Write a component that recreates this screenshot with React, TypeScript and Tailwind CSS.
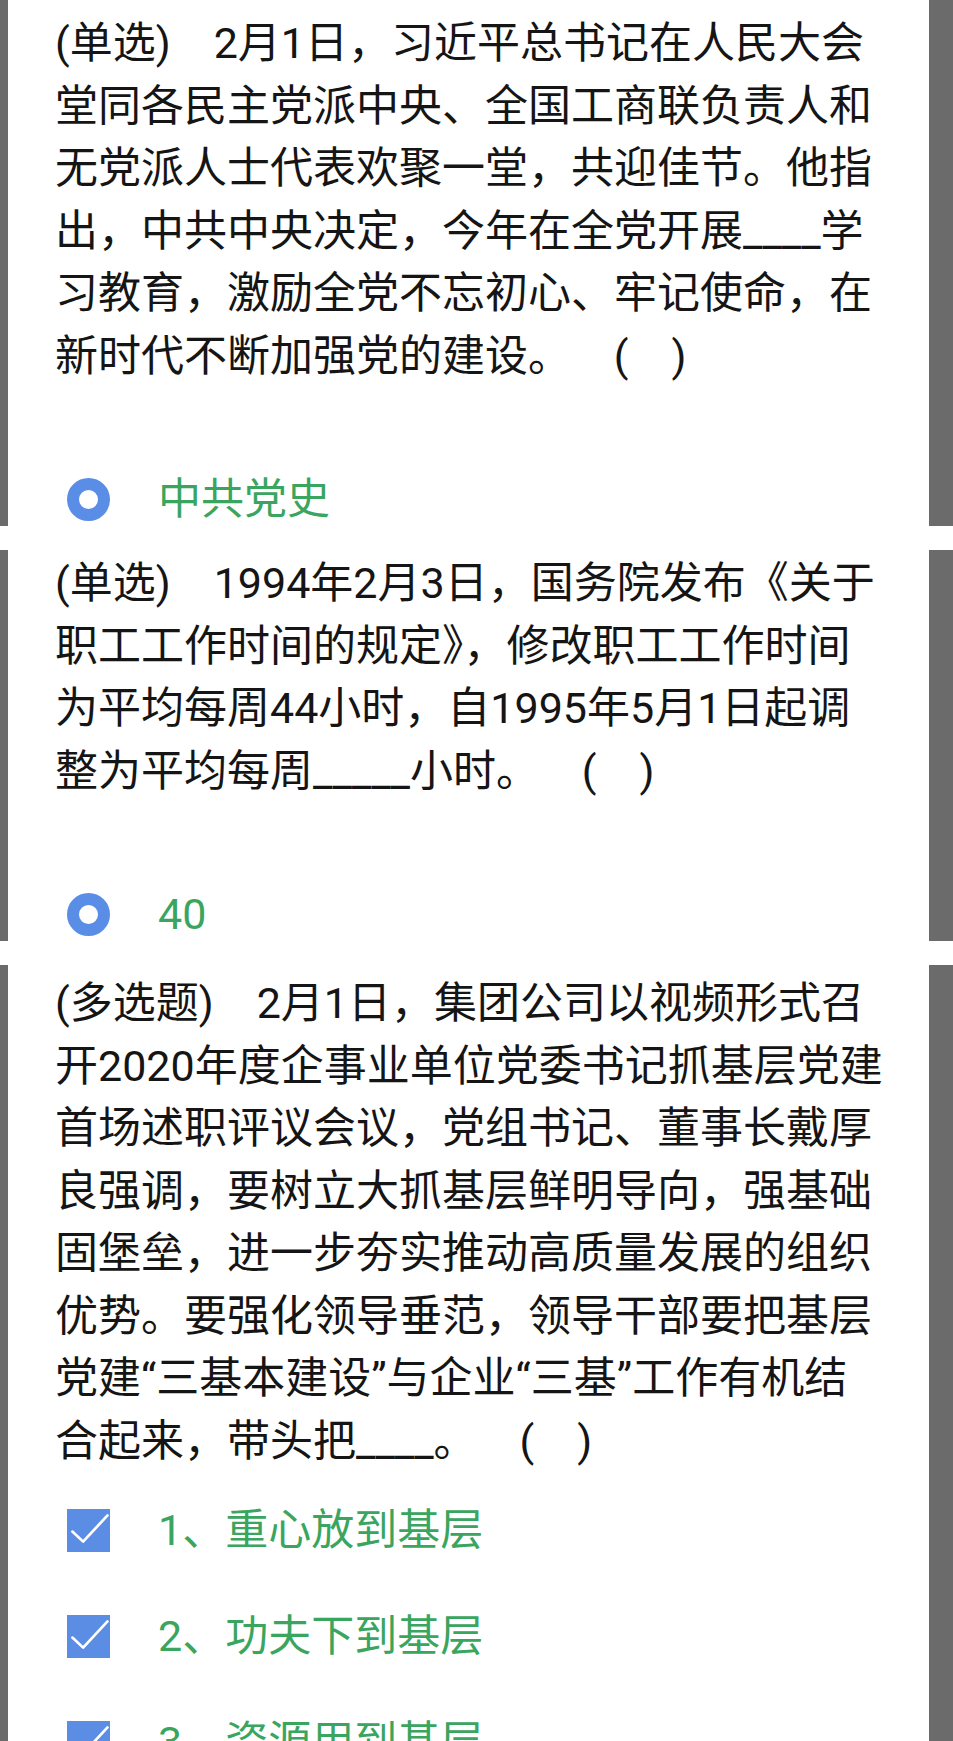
import React from "react";

type Option = { label: string };

type Question = {
  lines: string[];
  multi: boolean;
  options: Option[];
  padTop: string;
};

const questions: Question[] = [
  {
    lines: [
      "(单选)\u30002月1日，习近平总书记在人民大会",
      "堂同各民主党派中央、全国工商联负责人和",
      "无党派人士代表欢聚一堂，共迎佳节。他指",
      "出，中共中央决定，今年在全党开展____学",
      "习教育，激励全党不忘初心、牢记使命，在",
      "新时代不断加强党的建设。\u3000  (\u3000)",
    ],
    multi: false,
    options: [{ label: "中共党史" }],
    padTop: "pt-[12px]",
  },
  {
    lines: [
      "(单选)\u30001994年2月3日，国务院发布《关于",
      "职工工作时间的规定》，修改职工工作时间",
      "为平均每周44小时，自1995年5月1日起调",
      "整为平均每周_____小时。\u3000  (\u3000)",
    ],
    multi: false,
    options: [{ label: "40" }],
    padTop: "pt-[2px]",
  },
  {
    lines: [
      "(多选题)\u30002月1日，集团公司以视频形式召",
      "开2020年度企事业单位党委书记抓基层党建",
      "首场述职评议会议，党组书记、董事长戴厚",
      "良强调，要树立大抓基层鲜明导向，强基础",
      "固堡垒，进一步夯实推动高质量发展的组织",
      "优势。要强化领导垂范，领导干部要把基层",
      "党建“三基本建设”与企业“三基”工作有机结",
      "合起来，带头把____。\u3000  (\u3000)",
    ],
    multi: true,
    options: [
      { label: "1、重心放到基层" },
      { label: "2、功夫下到基层" },
      { label: "3、资源用到基层" },
    ],
    padTop: "pt-[7px]",
  },
];

function Radio() {
  return (
    <span className="block h-[43px] w-[43px] shrink-0 rounded-full border-[12px] border-[#5a8de6] bg-white" />
  );
}

function Checkbox() {
  return (
    <span className="flex h-[43px] w-[43px] shrink-0 items-center justify-center bg-[#5b8de4]">
      <svg viewBox="0 0 24 24" className="h-[43px] w-[43px]" fill="none">
        <path
          d="M3 12.6 L9 18.2 L22.6 3.6"
          stroke="#fff"
          strokeWidth="1.5"
          strokeLinecap="round"
          strokeLinejoin="round"
        />
      </svg>
    </span>
  );
}

function QuestionCard({ q }: { q: Question }) {
  return (
    <section className="flex bg-white">
      <div className="w-[8px] shrink-0 bg-[#6b6b6b]" />
      <div className={`flex-1 pl-[47px] ${q.padTop}`}>
        <div className="whitespace-pre text-[43px] leading-[62.5px] text-[#151515]">
          {q.lines.map((line, i) => (
            <div key={i}>{line}</div>
          ))}
        </div>

        {q.multi ? (
          <div className="mt-[31px] flex flex-col gap-[52px]">
            {q.options.map((o) => (
              <div key={o.label} className="flex h-[54px] items-center pl-[12px]">
                <Checkbox />
                <span className="ml-[48px] text-[43px] leading-none text-[#3aa55e]">
                  {o.label}
                </span>
              </div>
            ))}
          </div>
        ) : (
          <div className="mt-[85px]">
            {q.options.map((o) => (
              <div key={o.label} className="flex h-[54px] items-center pl-[12px]">
                <Radio />
                <span className="ml-[48px] text-[43px] leading-none text-[#3aa55e]">
                  {o.label}
                </span>
              </div>
            ))}
          </div>
        )}
      </div>
      <div className="w-[24px] shrink-0 bg-[#6b6b6b]" />
    </section>
  );
}

export default function App() {
  return (
    <div
      className="flex h-[1741px] w-[953px] flex-col gap-[24px] overflow-hidden bg-white"
      style={{ fontFamily: 'Roboto, "Noto Sans CJK SC", sans-serif' }}
    >
      {questions.map((q, i) => (
        <QuestionCard key={i} q={q} />
      ))}
    </div>
  );
}
